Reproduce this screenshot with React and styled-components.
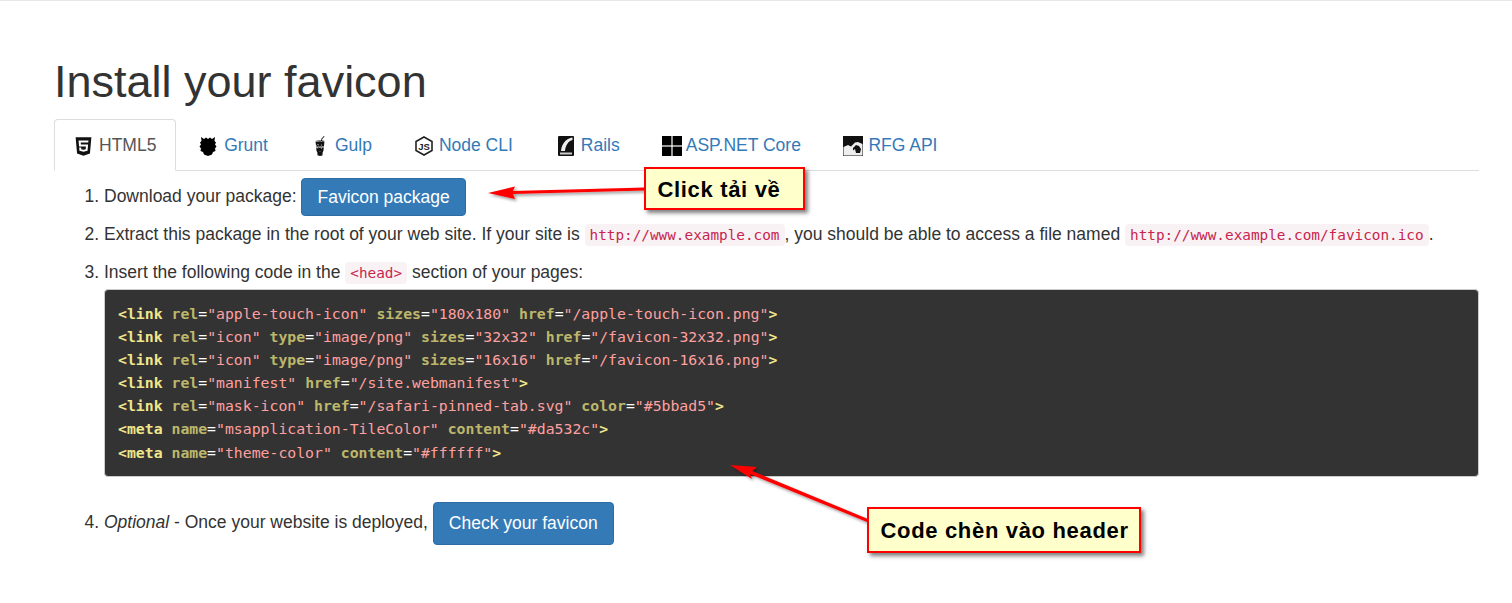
import React from 'react';
import styled, { createGlobalStyle } from 'styled-components';
import { FaHtml5, FaGulp } from 'react-icons/fa';

const GlobalStyle = createGlobalStyle`
    html, body {
        margin: 0;
        padding: 0;
        background: #fff;
    }
    body {
        font-family: "Liberation Sans", Arial, sans-serif;
        font-size: 17.5px;
        line-height: 1.43;
        color: #333;
    }
`;

const GruntIcon = () => (
    <svg width="18" height="20" viewBox="0 0 18 20">
        <path d="M2 1 L5 3 L7 1.5 L9 3 L11 1.5 L13 3 L16 1 L15.5 5 L17 6.5 L16 8.5 L17.5 10.5 L16 12.5 L16.5 15 L14 16 L13 18.5 L9 20 L5 18.5 L4 16 L1.5 15 L2 12.5 L0.5 10.5 L2 8.5 L1 6.5 L2.5 5 Z" fill="#000" />
    </svg>
);

const NodeIcon = () => (
    <svg width="18" height="20" viewBox="0 0 18 20">
        <path d="M9 1 L17 5.5 V14.5 L9 19 L1 14.5 V5.5 Z" fill="none" stroke="#222" strokeWidth="1.6" />
        <text x="9" y="13.5" fontSize="9.5" fontWeight="700" fontFamily="Liberation Sans" textAnchor="middle" fill="#222">JS</text>
    </svg>
);

const RailsIcon = () => (
    <svg width="16" height="20" viewBox="0 0 16 20">
        <rect width="16" height="20" rx="1" fill="#111" />
        <path d="M3 15 C3.5 8 8 2.5 14.5 1.5 L14.5 4 C10.5 5 7.5 9 7 15 Z" fill="#eee" />
        <rect x="2" y="16.5" width="12" height="2" fill="#ccc" />
    </svg>
);

const WindowsIcon = () => (
    <svg width="20" height="20" viewBox="0 0 20 20">
        <rect width="9.4" height="9.4" fill="#000" />
        <rect x="10.6" width="9.4" height="9.4" fill="#000" />
        <rect y="10.6" width="9.4" height="9.4" fill="#000" />
        <rect x="10.6" y="10.6" width="9.4" height="9.4" fill="#000" />
    </svg>
);

const RfgIcon = () => (
    <svg width="20" height="20" viewBox="0 0 20 20">
        <rect width="20" height="20" fill="#111" />
        <path d="M0.5 11 L5 9 L8 10.5 L12 6.5 L15 6 L19.5 8 L19.5 19.5 L0.5 19.5 Z" fill="#eee" />
        <path d="M10 12 L13 9 L16 10 L18 13 L17 17 L13 17 L12 13 L10 14.5 Z" fill="#111" />
    </svg>
);

const tabs = [
    { label: 'HTML5', icon: <FaHtml5 size={21} color="#111" />, slot: 24, offset: -2.5, active: true },
    { label: 'Grunt', icon: <GruntIcon />, slot: 25, offset: 0 },
    { label: 'Gulp', icon: <FaGulp size={20} color="#111" />, slot: 25, offset: 0 },
    { label: 'Node CLI', icon: <NodeIcon />, slot: 25, offset: 1 },
    { label: 'Rails', icon: <RailsIcon />, slot: 26, offset: 3 },
    { label: 'ASP.NET Core', icon: <WindowsIcon />, slot: 24, offset: 0 },
    { label: 'RFG API', icon: <RfgIcon />, slot: 25.5, offset: 0 },
];

// t = tag, a = attribute, s = string, p = plain
const attr = (name, value) => [['p', ' '], ['a', name], ['p', '='], ['s', `"${value}"`]];
const codeLines = [
    [['t', '<link'], ...attr('rel', 'apple-touch-icon'), ...attr('sizes', '180x180'), ...attr('href', '/apple-touch-icon.png'), ['t', '>']],
    [['t', '<link'], ...attr('rel', 'icon'), ...attr('type', 'image/png'), ...attr('sizes', '32x32'), ...attr('href', '/favicon-32x32.png'), ['t', '>']],
    [['t', '<link'], ...attr('rel', 'icon'), ...attr('type', 'image/png'), ...attr('sizes', '16x16'), ...attr('href', '/favicon-16x16.png'), ['t', '>']],
    [['t', '<link'], ...attr('rel', 'manifest'), ...attr('href', '/site.webmanifest'), ['t', '>']],
    [['t', '<link'], ...attr('rel', 'mask-icon'), ...attr('href', '/safari-pinned-tab.svg'), ...attr('color', '#5bbad5'), ['t', '>']],
    [['t', '<meta'], ...attr('name', 'msapplication-TileColor'), ...attr('content', '#da532c'), ['t', '>']],
    [['t', '<meta'], ...attr('name', 'theme-color'), ...attr('content', '#ffffff'), ['t', '>']],
];

export default function App() {
    return (
        <Page>
            <GlobalStyle />
            <Title>Install your favicon</Title>
            <TabBar>
                {tabs.map((tab) => (
                    <Tab key={tab.label} $active={tab.active}>
                        <IconSlot $width={tab.slot} $offset={tab.offset}>{tab.icon}</IconSlot>
                        <span>{tab.label}</span>
                    </Tab>
                ))}
            </TabBar>
            <Steps>
                <Step $height="44px">
                    Download your package: <BlueButton>Favicon package</BlueButton>
                </Step>
                <Step $height="38px">
                    Extract this package in the root of your web site. If your site is <InlineCode>http://www.example.com</InlineCode>, you should be able to access a file named <InlineCode>http://www.example.com/favicon.ico</InlineCode>.
                </Step>
                <Step>
                    Insert the following code in the <InlineCode>&lt;head&gt;</InlineCode> section of your pages:
                    <CodeBlock>
                        {codeLines.map((line, i) => (
                            <CodeLine key={i}>
                                {line.map(([kind, text], j) => (
                                    <Token key={j} $kind={kind}>{text}</Token>
                                ))}
                            </CodeLine>
                        ))}
                    </CodeBlock>
                </Step>
                <LastStep>
                    <em>Optional</em> - Once your website is deployed, <BlueButton $large>Check your favicon</BlueButton>
                </LastStep>
            </Steps>

            <Arrows width="1512" height="603" viewBox="0 0 1512 603">
                <defs>
                    <filter id="soft" x="-10%" y="-50%" width="120%" height="200%">
                        <feDropShadow dx="2" dy="2" stdDeviation="1.5" floodColor="#000" floodOpacity="0.4" />
                    </filter>
                </defs>
                <g filter="url(#soft)" fill="#f00">
                    <path d="M488 193 L515 186.5 L513 191 L645 187.5 L645 190.5 L513 194 L515 199 Z" />
                    <path d="M730 465 L757 467 L752 471 L868 519 L867 522 L750 474 L752 479 Z" />
                </g>
            </Arrows>

            <Callout $left={644} $top={167} $width={161} $height={43}>Click tải về</Callout>
            <Callout $left={867} $top={507} $width={274} $height={46}>Code chèn vào header</Callout>
        </Page>
    );
}

const Page = styled.div`
    position: relative;
    box-sizing: border-box;
    height: 603px;
    overflow: hidden;
    padding: 0 33px 0 54px;
    border-top: 1px solid #e7e7e7;
`;

const Title = styled.h1`
    margin: 0;
    padding-top: 55px;
    height: 63px;
    font-size: 45px;
    font-weight: 400;
    line-height: 52px;
    color: #333;
`;

const TabBar = styled.div`
    display: flex;
    height: 51px;
    border-bottom: 1px solid #ddd;
`;

const Tab = styled.div`
    display: flex;
    align-items: center;
    box-sizing: border-box;
    height: 52px;
    padding: 2px ${(p) => (p.$active ? '18.8px' : '18px')} 0 20px;
    margin-right: 2px;
    border: 1px solid ${(p) => (p.$active ? '#ddd' : 'transparent')};
    border-bottom-color: ${(p) => (p.$active ? '#fff' : 'transparent')};
    border-radius: 4px 4px 0 0;
    background: ${(p) => (p.$active ? '#fff' : 'transparent')};
    color: ${(p) => (p.$active ? '#555' : '#337ab7')};
    font-size: 17.5px;
    white-space: nowrap;
`;

const IconSlot = styled.span`
    display: flex;
    box-sizing: border-box;
    width: ${(p) => p.$width}px;

    svg {
        flex-shrink: 0;
        margin-left: ${(p) => p.$offset}px;
    }
`;

const Steps = styled.ol`
    margin: 0;
    padding: 0 0 0 50px;
`;

const Step = styled.li`
    height: ${(p) => p.$height || 'auto'};
    padding-top: 7px;
    box-sizing: border-box;
`;

const LastStep = styled.li`
    margin-top: 25px;
`;

const BlueButton = styled.span`
    display: inline-block;
    box-sizing: border-box;
    height: ${(p) => (p.$large ? '43px' : '38px')};
    padding: 0 15px;
    background: #337ab7;
    border: 1px solid #2e6da4;
    border-radius: 4px;
    color: #fff;
    font-size: 17.5px;
    line-height: ${(p) => (p.$large ? '41px' : '36px')};
    vertical-align: middle;
`;

const InlineCode = styled.code`
    padding: 3px 5px;
    font-family: "DejaVu Sans Mono", monospace;
    font-size: 14.35px;
    color: #c7254e;
    background: #f9f2f4;
    border-radius: 4px;
`;

const CodeBlock = styled.pre`
    margin: 4px 0 0;
    box-sizing: border-box;
    height: 188px;
    padding: 12px 13px;
    background: #333;
    border: 1px solid #ccc;
    border-radius: 4px;
    font-family: "DejaVu Sans Mono", monospace;
    font-size: 14.8px;
    line-height: 23.1px;
    color: #fff;
`;

const CodeLine = styled.div`
    height: 23.1px;
`;

const tokenColors = { t: '#f0e68c', a: '#bdb76b', s: '#ffa0a0', p: '#fff' };

const Token = styled.span`
    color: ${(p) => tokenColors[p.$kind]};
    font-weight: ${(p) => (p.$kind === 't' || p.$kind === 'a' ? 700 : 400)};
`;

const Arrows = styled.svg`
    position: absolute;
    left: 0;
    top: -1px;
    pointer-events: none;
`;

const Callout = styled.div`
    position: absolute;
    left: ${(p) => p.$left}px;
    top: ${(p) => p.$top - 1}px;
    width: ${(p) => p.$width}px;
    height: ${(p) => p.$height}px;
    box-sizing: border-box;
    padding: 2px 0 0 11.5px;
    display: flex;
    align-items: center;
    background: #ffc;
    border: 2px solid #f00;
    box-shadow: 3px 3px 4px rgba(0, 0, 0, 0.5);
    color: #000;
    font-size: 22px;
    font-weight: 700;
    letter-spacing: 0.67px;
    white-space: nowrap;
`;
